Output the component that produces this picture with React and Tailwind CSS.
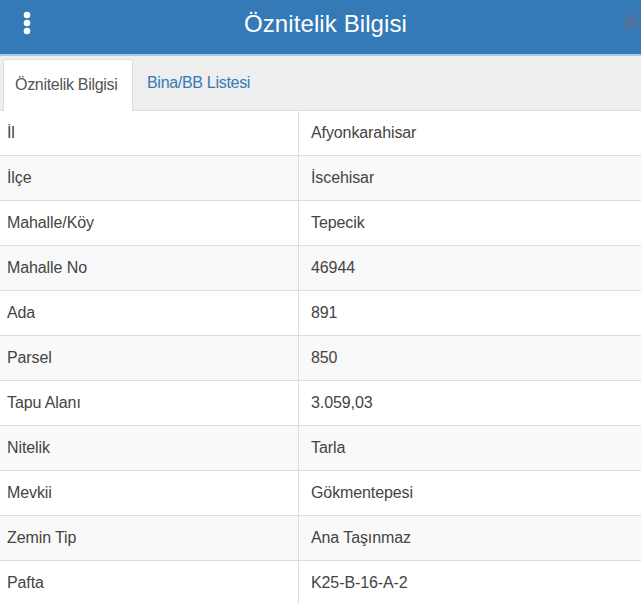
import React from 'react';

const rows = [
  ['İl', 'Afyonkarahisar'],
  ['İlçe', 'İscehisar'],
  ['Mahalle/Köy', 'Tepecik'],
  ['Mahalle No', '46944'],
  ['Ada', '891'],
  ['Parsel', '850'],
  ['Tapu Alanı', '3.059,03'],
  ['Nitelik', 'Tarla'],
  ['Mevkii', 'Gökmentepesi'],
  ['Zemin Tip', 'Ana Taşınmaz'],
  ['Pafta', 'K25-B-16-A-2'],
];

const App = () => {
  return (
    <div className="w-[641px] h-[604px] overflow-hidden bg-white font-['Liberation_Sans',Arial,sans-serif] text-[#444]">
      {/* Header */}
      <div className="relative flex items-center justify-center h-[56px] bg-[#337ab7] border-b-2 border-[#a9cbe9]">
        <svg className="absolute left-[23px] top-[11px]" width="8" height="24" viewBox="0 0 8 24">
          <circle cx="4" cy="4" r="3.3" fill="#fff" />
          <circle cx="4" cy="12" r="3.3" fill="#fff" />
          <circle cx="4" cy="20" r="3.3" fill="#fff" />
        </svg>
        <h1 className="text-[24px] text-white ml-[10px] mt-[-6px] tracking-[0.1px]">Öznitelik Bilgisi</h1>
        <svg className="absolute left-[622px] top-[13px]" width="18" height="18" viewBox="0 0 18 18">
          <path d="M3.5 3.5 L14.5 14.5 M14.5 3.5 L3.5 14.5" stroke="#52749a" strokeWidth="4.5" strokeLinecap="round" />
        </svg>
      </div>

      {/* Tabs */}
      <div className="flex items-end h-[55px] bg-[#eeeeee] border-b border-[#dddddd] pl-[3px]">
        <div className="h-[52px] w-[130px] pl-[11px] pb-[2px] flex items-center bg-white border border-b-0 border-[#dddddd] rounded-t-[3px] -mb-px text-[16px] tracking-[-0.3px] text-[#555]">
          Öznitelik Bilgisi
        </div>
        <div className="h-[52px] pl-[14px] pb-[2px] flex items-center text-[16px] tracking-[-0.3px] text-[#337ab7]">
          Bina/BB Listesi
        </div>
      </div>

      {/* Table */}
      <div className="flex flex-col">
        {rows.map(([k, v], i) => (
          <div
            key={k}
            className={`grid grid-cols-[299px_1fr] h-[45px] border-b border-[#dddddd] text-[16px] tracking-[-0.1px] ${i % 2 === 1 ? 'bg-[#f9f9f9]' : 'bg-white'}`}
          >
            <div className="flex items-center pl-[7px] border-r border-[#dddddd]">{k}</div>
            <div className="flex items-center pl-[12px]">{v}</div>
          </div>
        ))}
      </div>
    </div>
  );
};

export default App;
